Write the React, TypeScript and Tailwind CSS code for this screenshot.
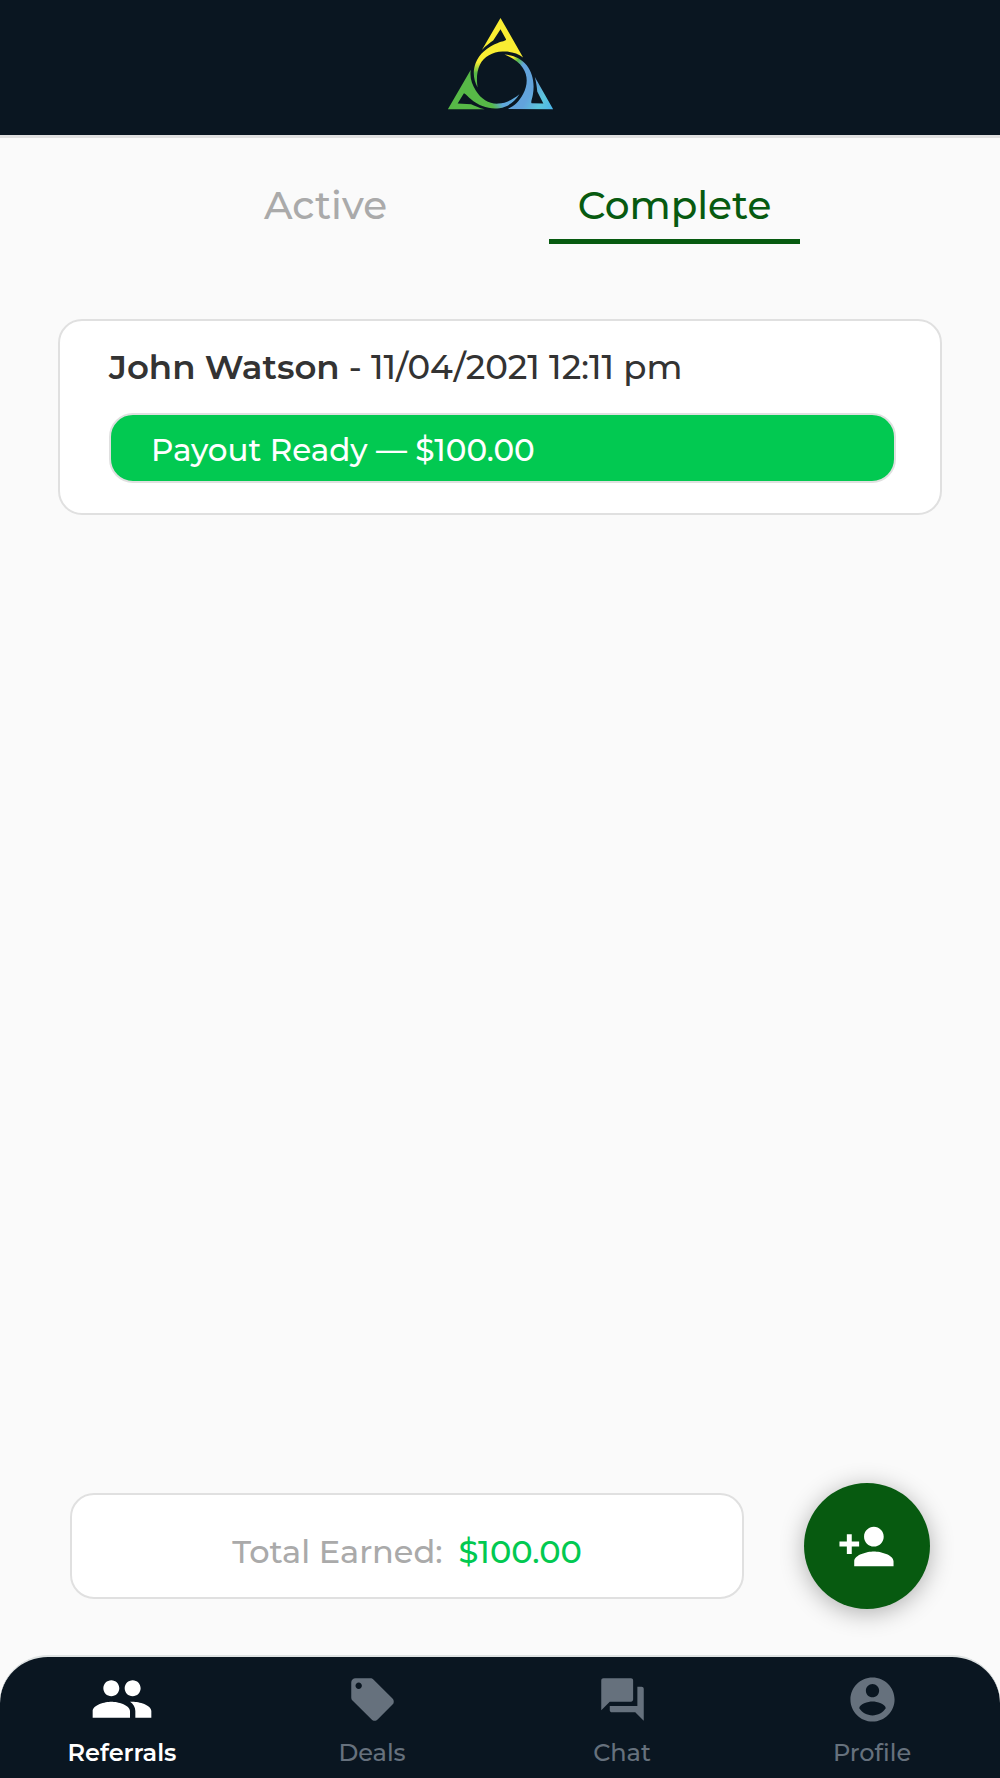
import React from 'react';
import { MdForum, MdLocalOffer, MdPeople, MdPersonAdd } from 'react-icons/md';

// One arm of the mark, the other two are the same shape turned by 120 degrees
const ARM =
  'M211 53L279 172C262 158 241 153 217 154C187 155 161 169 149 194C140 213 138 235 142 262C129 237 127 213 136 189C146 162 172 139 203 128C216 123 226 123 228 118L211 87L189 121C179 128 168 136 155 149Z';

const Logo = ({ className }: { className?: string }) => (
  <svg viewBox="50 50 322 280" className={className} role="img" aria-label="Logo">
    <defs>
      <linearGradient id="arm-top" gradientUnits="userSpaceOnUse" x1="0" y1="54" x2="0" y2="260">
        <stop offset="0.64" stopColor="#f9ed32" />
        <stop offset="0.8" stopColor="#57b947" />
      </linearGradient>
      <linearGradient id="arm-left" gradientUnits="userSpaceOnUse" x1="0" y1="54" x2="0" y2="260">
        <stop offset="0.58" stopColor="#57b947" />
        <stop offset="0.72" stopColor="#5fa8dc" />
      </linearGradient>
      <linearGradient id="arm-right" gradientUnits="userSpaceOnUse" x1="0" y1="54" x2="0" y2="260">
        <stop offset="0" stopColor="#4bb4ea" />
        <stop offset="0.2" stopColor="#5cc6dc" />
        <stop offset="0.4" stopColor="#62a3dc" />
        <stop offset="0.7" stopColor="#62a3dc" />
        <stop offset="0.8" stopColor="#57b947" />
        <stop offset="0.88" stopColor="#f9ed32" />
      </linearGradient>
    </defs>
    <path d={ARM} fill="url(#arm-top)" />
    <path d={ARM} fill="url(#arm-left)" transform="rotate(-120 211 236)" />
    <path d={ARM} fill="url(#arm-right)" transform="rotate(120 211 236)" />
  </svg>
);

const AccountIcon = ({ className }: { className?: string }) => (
  <svg viewBox="0 0 24 24" className={className} fill="currentColor">
    <path d="M12 2C6.48 2 2 6.48 2 12s4.48 10 10 10 10-4.48 10-10S17.52 2 12 2zm0 3c1.66 0 3 1.34 3 3s-1.34 3-3 3-3-1.34-3-3 1.34-3 3-3zm0 14.2c-2.5 0-4.71-1.28-6-3.22.03-1.99 4-3.08 6-3.08 1.99 0 5.97 1.09 6 3.08-1.29 1.94-3.5 3.22-6 3.22z" />
  </svg>
);

const navItems = [
  { label: 'Referrals', icon: <MdPeople className="size-16" />, active: true },
  { label: 'Deals', icon: <MdLocalOffer className="size-[51px]" />, active: false },
  { label: 'Chat', icon: <MdForum className="size-[51px]" />, active: false },
  { label: 'Profile', icon: <AccountIcon className="size-[53px]" />, active: false },
];

const App: React.FC = () => {
  return (
    <div className="flex min-h-screen flex-col bg-[#fafafa] font-[Montserrat,Inter,sans-serif] font-medium text-[#333333]">
      <header className="flex justify-center border-b-3 border-[#e0e0e0] bg-[#0a1621] pt-[17px] pb-[25px]">
        <Logo className="h-[93px] w-[107px]" />
      </header>

      {/* Tabs */}
      <div role="tablist" className="mx-[20%] mt-8 grid grid-cols-2 gap-[98px]">
        <button role="tab" aria-selected="false" className="h-[74px] border-b-5 border-transparent pt-0.5 text-[39px] text-[#aaaaaa]">
          Active
        </button>
        <button role="tab" aria-selected="true" className="h-[74px] border-b-5 border-[#075a10] pt-0.5 text-[39px] text-[#075a10]">
          Complete
        </button>
      </div>

      <main className="flex-1 px-[58px] pt-[75px]">
        <article className="rounded-3xl border-2 border-[#e0e0e0] bg-white pt-[22px] pr-11 pb-[30px] pl-[49px]">
          <h2 className="text-[34px] leading-12">
            <span className="font-semibold">John Watson</span> - 11/04/2021 12:11 pm
          </h2>
          <div className="mt-[22px] flex h-[70px] items-center rounded-3xl border-2 border-[#e0e0e0] bg-[#02c951] px-10 pt-1 text-[31px] text-white">
            Payout Ready — $100.00
          </div>
        </article>
      </main>

      <div className="flex items-center gap-[60px] px-[70px] pb-[46px]">
        <div className="flex h-[106px] flex-1 items-center justify-center gap-4 rounded-3xl border-2 border-[#e0e0e0] bg-white pt-3 text-[32px]">
          <span className="text-[#aaaaaa]">Total Earned:</span>
          <span className="text-[#02c951]">$100.00</span>
        </div>
        <button
          aria-label="Add referral"
          className="flex size-[126px] items-center justify-center rounded-full bg-[#075a10] pr-0.5 text-white shadow-[0_4px_24px_rgba(0,0,0,0.3)]"
        >
          <MdPersonAdd className="size-[59px]" />
        </button>
      </div>

      <nav className="grid h-[123px] grid-cols-4 rounded-t-[48px] border-t-2 border-[#dfe3e3] bg-[#0a1621]">
        {navItems.map((item) => (
          <a
            key={item.label}
            href="#"
            className={`flex flex-col items-center gap-1.5 pt-2.5 pr-1.5 text-2xl ${item.active ? 'font-semibold text-white' : 'text-[#66717d]'}`}
          >
            <span className="flex h-16 items-center">{item.icon}</span>
            <span>{item.label}</span>
          </a>
        ))}
      </nav>
    </div>
  );
};

export default App;
